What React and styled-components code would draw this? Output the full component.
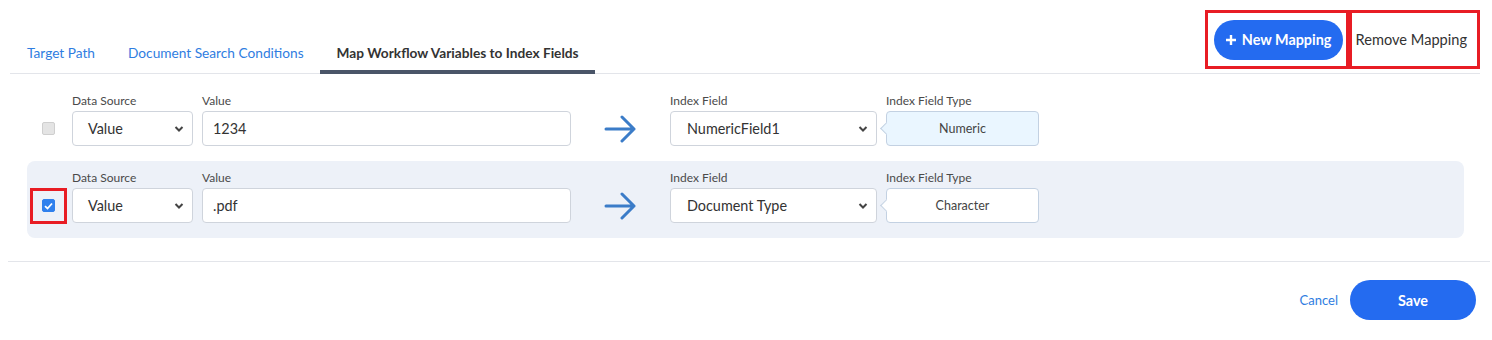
import React, { useState } from 'react';
import styled, { createGlobalStyle } from 'styled-components';

const GlobalStyle = createGlobalStyle`
  body {
    margin: 0;
    background: #fff;
    font-family: Lato, "Liberation Sans", sans-serif;
    color: #333;
  }
`;

const Page = styled.div`
  width: 1492px;
  height: 340px;
  box-sizing: border-box;
  padding: 0 2px 0 8px;
`;

const Header = styled.div`
  display: flex;
  justify-content: space-between;
  align-items: flex-end;
  height: 73px;
  margin: 0 10px 0 2px;
  border-bottom: 1px solid #e3e5ea;
`;

const Tabs = styled.div`
  display: flex;
`;

const Tab = styled.div`
  padding: 0 16px 9px 17px;
  font-size: 13.7px;
  line-height: 16px;
  color: ${p => (p.active ? '#333' : '#2f7de1')};
  font-weight: ${p => (p.active ? 700 : 400)};
  border-bottom: 4px solid ${p => (p.active ? '#4a5568' : 'transparent')};
  margin-bottom: -1px;
  cursor: pointer;
`;

const Actions = styled.div`
  display: flex;
  align-self: flex-start;
  margin-top: 10px;
`;

const Marked = styled.div`
  display: flex;
  align-items: center;
  height: 53px;
  border: 3px solid #e81c24;
  padding: ${p => p.pad};
`;

const PrimaryButton = styled.button`
  display: inline-flex;
  align-items: center;
  justify-content: center;
  gap: 5px;
  height: 40px;
  width: ${p => p.w}px;
  border: none;
  border-radius: 20px;
  background: #246bf0;
  color: #fff;
  font-family: inherit;
  font-size: 14.4px;
  font-weight: 700;
  cursor: pointer;
`;

const TextButton = styled.button`
  border: none;
  background: none;
  padding: 0;
  font-family: inherit;
  font-size: ${p => p.size || 14}px;
  color: ${p => p.color || '#333'};
  cursor: pointer;
`;

const Rows = styled.div`
  margin: 10px 26px 0 19px;
  display: flex;
  flex-direction: column;
`;

const Row = styled.div`
  display: flex;
  align-items: flex-end;
  height: 77px;
  box-sizing: border-box;
  padding-bottom: 15px;
  border-radius: 8px;
  background: ${p => (p.selected ? '#edf1f8' : 'transparent')};
`;

const CheckCell = styled.div`
  width: 45px;
  height: 35px;
  display: flex;
  align-items: center;
`;

const CheckFrame = styled.div`
  margin-left: 3px;
  width: 31px;
  height: 30px;
  display: flex;
  align-items: center;
  justify-content: center;
  border: 3px solid ${p => (p.marked ? '#e81c24' : 'transparent')};
`;

const Box = styled.div`
  width: 13px;
  height: 13px;
  box-sizing: border-box;
  border-radius: 2px;
  display: flex;
  align-items: center;
  justify-content: center;
  background: ${p => (p.checked ? '#2f80ed' : '#e4e4e4')};
  border: 1px solid ${p => (p.checked ? '#2f80ed' : '#cfcfcf')};
`;

const Field = styled.div`
  display: flex;
  flex-direction: column;
  width: ${p => p.w}px;
  margin-right: ${p => p.mr || 0}px;
`;

const Label = styled.div`
  font-size: 12px;
  line-height: 14px;
  color: #4a4a4a;
  margin-bottom: 3px;
`;

const Control = styled.div`
  position: relative;
  height: 35px;
  box-sizing: border-box;
  border: 1px solid #cfd4dc;
  border-radius: 4px;
  background: #fff;
  display: flex;
  align-items: center;
  padding-left: ${p => p.pl || 10}px;
  font-size: 14.4px;
  color: #333;
`;

const Chevron = styled.svg`
  position: absolute;
  right: 8px;
  top: 13px;
`;

const TypeBox = styled.div`
  position: relative;
  height: 35px;
  box-sizing: border-box;
  border: 1px solid #c3d1e2;
  border-radius: 4px;
  background: ${p => (p.tint ? '#eaf6ff' : '#fff')};
  display: flex;
  align-items: center;
  justify-content: center;
  font-size: 12.5px;
  color: #444;

  &::before {
    content: '';
    position: absolute;
    left: -5px;
    top: 12px;
    width: 8px;
    height: 8px;
    background: ${p => (p.tint ? '#eaf6ff' : '#fff')};
    border-left: 1px solid #c3d1e2;
    border-bottom: 1px solid #c3d1e2;
    transform: rotate(45deg);
  }
`;

const ArrowCell = styled.div`
  width: 99px;
  height: 35px;
  display: flex;
  align-items: center;
  justify-content: center;
`;

const Footer = styled.div`
  margin-top: 23px;
  border-top: 1px solid #e3e5ea;
  display: flex;
  justify-content: flex-end;
  align-items: center;
  gap: 12px;
  padding: 18px 14px 0 0;
`;

const Down = () => (
  <Chevron width="10" height="8" viewBox="0 0 10 8">
    <path d="M1.5 2 L5 5.5 L8.5 2" fill="none" stroke="#444" strokeWidth="2" />
  </Chevron>
);

const Arrow = () => (
  <svg width="33" height="28" viewBox="0 0 33 28">
    <path d="M2 14 H30 M18 2 L30 14 L18 26" fill="none" stroke="#3b7cc8" strokeWidth="3" strokeLinecap="round" strokeLinejoin="round" />
  </svg>
);

const mappings = [
  { id: 1, source: 'Value', value: '1234', index: 'NumericField1', type: 'Numeric', tint: true },
  { id: 2, source: 'Value', value: '.pdf', index: 'Document Type', type: 'Character' },
];

export default function App() {
  const [selected, setSelected] = useState([2]);

  const toggle = id => {
    setSelected(selected.includes(id) ? selected.filter(s => s !== id) : [...selected, id]);
  };

  return (
    <Page>
      <GlobalStyle />
      <Header>
        <Tabs>
          <Tab>Target Path</Tab>
          <Tab>Document Search Conditions</Tab>
          <Tab active>Map Workflow Variables to Index Fields</Tab>
        </Tabs>
        <Actions>
          <Marked pad="0 3px 0 6px">
            <PrimaryButton w={129}>
              <svg width="12" height="12" viewBox="0 0 12 12">
                <path d="M6 1 V11 M1 6 H11" stroke="#fff" strokeWidth="2.4" />
              </svg>
              New Mapping
            </PrimaryButton>
          </Marked>
          <Marked pad="0 10px 0 4px">
            <TextButton size={14.6}>Remove Mapping</TextButton>
          </Marked>
        </Actions>
      </Header>

      <Rows>
        {mappings.map(m => {
          const on = selected.includes(m.id);
          return (
            <Row key={m.id} selected={on}>
              <CheckCell onClick={() => toggle(m.id)}>
                <CheckFrame marked={on}>
                  <Box checked={on}>
                    {on && (
                      <svg width="9" height="8" viewBox="0 0 9 8">
                        <path d="M1 4.2 L3.5 6.5 L8 1.5" fill="none" stroke="#fff" strokeWidth="1.8" />
                      </svg>
                    )}
                  </Box>
                </CheckFrame>
              </CheckCell>
              <Field w={121} mr={9}>
                <Label>Data Source</Label>
                <Control pl={15}>
                  {m.source}
                  <Down />
                </Control>
              </Field>
              <Field w={369}>
                <Label>Value</Label>
                <Control>{m.value}</Control>
              </Field>
              <ArrowCell>
                <Arrow />
              </ArrowCell>
              <Field w={207} mr={9}>
                <Label>Index Field</Label>
                <Control pl={16}>
                  {m.index}
                  <Down />
                </Control>
              </Field>
              <Field w={153}>
                <Label>Index Field Type</Label>
                <TypeBox tint={m.tint}>{m.type}</TypeBox>
              </Field>
            </Row>
          );
        })}
      </Rows>

      <Footer>
        <TextButton size={13} color="#2f7de1">Cancel</TextButton>
        <PrimaryButton w={126}>Save</PrimaryButton>
      </Footer>
    </Page>
  );
}
